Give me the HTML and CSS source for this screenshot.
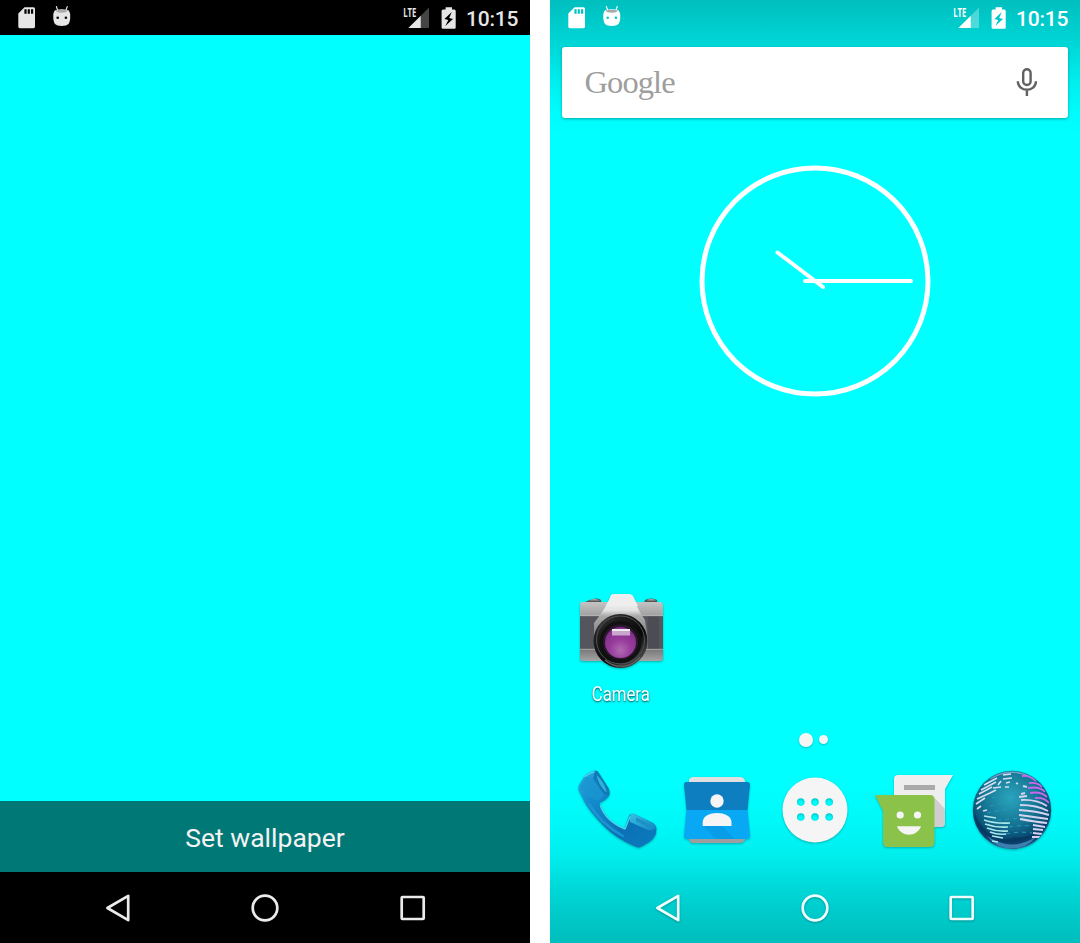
FILE: index.html
```
<!DOCTYPE html>
<html lang="en">
<head>
<meta charset="utf-8">
<title>Wallpaper</title>
<link rel="stylesheet" href="styles.css">
</head>
<body>
<svg class="defs" aria-hidden="true">
  <defs>
    <symbol id="sd" viewBox="0 0 18 22"><path fill-rule="evenodd" d="M6.500 .3H15.500Q17 .3 17 1.800V19.800Q17 21.200 15.500 21.200H1.800Q.3 21.200 .3 19.800V6.500ZM6.400 2.200V6.800H8.600V2.200ZM9.700 2.200V6.800H11.900V2.200ZM13 2.200V6.800H15.200V2.200Z"/></symbol>
    <symbol id="bug" viewBox="0 0 18 21"><path d="M3.400.6L4.600 4M14.200.6L13.100 4" fill="none" stroke="currentColor" stroke-width="1.200" stroke-linecap="round"/><path fill-rule="evenodd" d="M3.200 4Q8.700 2.600 14.500 4Q16.200 4.200 16.500 6L17.200 8V13L16.500 16Q16 19 13 19.600Q8.700 20.300 4.500 19.600Q1.500 19 1 16L.3 13V8L1 6Q1.400 4.200 3.200 4ZM4.700 10.400a1.300 1.300 0 1 0 0 2.600a1.300 1.300 0 1 0 0-2.600ZM12.900 10.400a1.300 1.300 0 1 0 0 2.600a1.300 1.300 0 1 0 0-2.600Z"/><path class="bug-lid" d="M2.600 4.600Q8.700 3 14.900 4.600Q14 6.800 8.700 6.800Q3.500 6.800 2.600 4.600Z"/></symbol>
    <symbol id="signal" viewBox="0 0 28 22"><text x="0.200" y="9.600" font-size="12.500" font-weight="700" textLength="13.200" lengthAdjust="spacingAndGlyphs">LTE</text><path opacity=".3" d="M26 .5V21H17.800V8.700Z"/><path d="M17.800 8.700V21H5.300Z"/></symbol>
    <symbol id="battery" viewBox="0 0 16 23"><path fill-rule="evenodd" d="M4.600 .3H11V2.500H13.300Q14.700 2.500 14.700 4V20.400Q14.700 21.800 13.300 21.800H2Q.6 21.800 .6 20.400V4Q.6 2.500 2 2.500H4.600ZM10.800 5L3.400 12L7.300 13L4.300 19L12 12L8.200 11Z"/></symbol>
    <symbol id="back" viewBox="0 0 32 32"><path d="M25.200 3.800V28.200L4.400 16Z"/></symbol>
    <symbol id="home" viewBox="0 0 32 32"><circle cx="16" cy="16" r="12.300"/></symbol>
    <symbol id="recent" viewBox="0 0 32 32"><rect x="4.700" y="5" width="22" height="22" rx=".8"/></symbol>
  </defs>
</svg>

<main class="screens">
  <section class="phone picker">
    <header class="status">
      <svg class="sd"><use href="#sd"/></svg>
      <svg class="bug"><use href="#bug"/></svg>
      <svg class="signal"><use href="#signal"/></svg>
      <svg class="battery"><use href="#battery"/></svg>
      <span class="time">10:15</span>
    </header>
    <div class="preview"></div>
    <button class="set">Set wallpaper</button>
    <nav class="nav">
      <svg class="back"><use href="#back"/></svg><svg><use href="#home"/></svg><svg><use href="#recent"/></svg>
    </nav>
  </section>

  <section class="phone launcher">
    <header class="status">
      <svg class="sd"><use href="#sd"/></svg>
      <svg class="bug"><use href="#bug"/></svg>
      <svg class="signal"><use href="#signal"/></svg>
      <svg class="battery"><use href="#battery"/></svg>
      <span class="time">10:15</span>
    </header>

    <div class="search">
      <span class="logo">Google</span>
      <svg class="mic" viewBox="0 0 22 30" fill="none" stroke="#616161" stroke-width="2.400"><rect x="7.200" y="2.200" width="7.400" height="15.800" rx="3.700"/><path d="M1.800 14.200C2 25.600 19.800 25.600 20 14.200M10.900 22.500V29"/></svg>
    </div>

    <svg class="clock" viewBox="0 0 232 232" fill="none" stroke="#fff" stroke-linecap="round">
      <circle cx="116" cy="116" r="113" stroke-width="5"/>
      <path stroke-width="4" d="M106 116H212M78.500 87.500L124 122"/>
    </svg>

    <div class="app">
      <svg class="camera" viewBox="0 0 86 78">
        <defs>
          <linearGradient id="cb" x2="0" y2="1"><stop stop-color="#c4c4c4"/><stop offset=".22" stop-color="#a2a2a2"/><stop offset=".8" stop-color="#777"/><stop offset="1" stop-color="#a5a5a5"/></linearGradient>
          <linearGradient id="cp" x2="0" y2="1"><stop stop-color="#fff"/><stop offset=".3" stop-color="#e2e2e2"/><stop offset=".4" stop-color="#aaa"/><stop offset="1" stop-color="#666"/></linearGradient>
          <linearGradient id="cl" x2=".8" y2="1"><stop stop-color="#555"/><stop offset=".25" stop-color="#222"/><stop offset=".65" stop-color="#080808"/><stop offset="1" stop-color="#555"/></linearGradient>
          <radialGradient id="cg" cy=".75" r=".8"><stop stop-color="#b06ab2"/><stop offset=".45" stop-color="#963a9c"/><stop offset="1" stop-color="#7a2b83"/></radialGradient>
        </defs>
        <path fill="#555" d="M11 6Q18 3 22 6V10H6V8ZM66 6Q72 3 78 6V10H65Z"/>
        <path fill="#aaa" d="M12 5.500Q17 4 21 6.500H11ZM69 5.500Q74 4 77 6.500H68Z"/>
        <path fill="url(#cb)" d="M3 8H82Q84 9 84 12V64Q84 67 81 67H4Q1 67 1 64V11Q1 8 3 8Z"/>
        <path fill="#55555d" d="M1 22H84V55H1Z"/><path fill="#4c4c55" d="M69 22H80V55H69Z"/>
        <path stroke="#bebebe" stroke-width=".7" d="M1 21.700H84M1 55.300H84M2 10H82"/>
        <path fill="url(#cp)" d="M32 1Q34 0 37 0H49Q52 0 54 2Q57 13 66 26L69 46V55H15V29Q28 13 32 1Z"/>
        <path fill="#eee" d="M32.500 1Q34 0 37 0H49Q52 0 54 2L59 12H27Z"/>
        <circle cx="41.500" cy="47" r="27" fill="url(#cl)"/>
        <circle cx="41.500" cy="46" r="24" fill="none" stroke="#4d5357" stroke-width="1"/>
        <circle cx="41.500" cy="48" r="21" fill="#111"/>
        <path d="M26 66A24 24 0 0 0 61 63" fill="none" stroke="#666" stroke-width="1.200"/>
        <circle cx="41.500" cy="48" r="17.500" fill="#2c1731"/><circle cx="41.500" cy="48.500" r="15.500" fill="url(#cg)"/>
        <path fill="#c9a7cc" d="M33 35H51V41.500H33Z"/><path fill="#eee" d="M33 35H51V37H33Z"/>
      </svg>
      <span class="label">Camera</span>
    </div>

    <div class="pages"><i class="page current"></i><i class="page"></i></div>

    <div class="dock">
      <svg class="dial" viewBox="0 0 80 80">
        <defs>
          <linearGradient id="ph" x2="1" y2="1"><stop stop-color="#27aee0"/><stop offset=".3" stop-color="#1389cb"/><stop offset=".65" stop-color="#0c70b4"/><stop offset="1" stop-color="#0a7cc0"/></linearGradient>
          <linearGradient id="pe" x2="1" y2="1"><stop stop-color="#39bfe2"/><stop offset="1" stop-color="#1187c4"/></linearGradient>
        </defs>
        <path fill="url(#ph)" d="M1 15L6.500 6Q11 2 16.500 .5Q19 0 20.500 2.500L31 19Q32 23 31 26Q27 31 21.500 33C25 44 34 55 46.500 59L51 46Q53 43 56 44L75 53Q78 55 78.500 58L78 64Q76 69 71.500 72L63 77Q60 78 57 76.500Q51 74 46.500 71.500Q31 63 20 50Q11 40 6.500 32L.5 20Q0 17 1 15Z"/>
        <path fill="#1179b8" d="M17 1Q19 0 20.500 2.500L31 19Q32 23 31 26L26 24L15 9Z"/>
        <path fill="#31b2d9" d="M18.500 5Q26 12 28.500 21Q29 23 27.500 21.500Q20 14 18.500 5Z"/>
        <path fill="#1a95d1" opacity=".8" d="M2 17L8 7L15 8L26 25L20 31Q10 28 2 17Z"/>
        <path fill="none" stroke="#4ad3ec" stroke-width="1.400" stroke-linecap="round" d="M7 6.500Q11 3 16 2M22.500 36Q28 51 46 58.500M47 59L52 46.500"/>
        <path fill="url(#pe)" d="M52 46Q53 43 56 44L75 53Q78 55 78 58Q75 61 70 60L52 52Z"/>
        <path fill="#1d90c6" d="M58 47.500L74 55Q74 58 70 57L58 51Z"/>
        <path fill="none" stroke="#1f9ad4" stroke-width="2.500" stroke-linecap="round" opacity=".8" d="M11 34Q23 54 45 66"/>
      </svg>
      <svg class="people" viewBox="0 0 68 70">
        <path fill="#e0e0e0" d="M6 8V4Q7 1 10 1H57Q61 1 62 5V9Z"/><path fill="#9e9e9e" d="M6 61H62V63Q61 67 57 67H10Q7 67 6 63Z"/>
        <path fill="#0d7fc1" d="M3 6H64Q67 6 67 9L64.500 34H3.500L1 9Q1 6 3 6Z"/><path fill="#08a8f4" d="M3.500 34H64.500L67 60Q67 63 64 63H4Q1 63 1 60Z"/>
        <path fill="#0999df" opacity=".7" d="M4 34L33 63H52L36 47L20 50Z"/><circle cx="34" cy="25" r="6.700" fill="#f5f5f5"/><path fill="#f5f5f5" d="M19.700 50V46C20 34 48 34 48.500 46V50Z"/>
      </svg>
      <svg class="apps" viewBox="0 0 66 66"><path fill="#f5f5f5" fill-rule="evenodd" d="M33 .5a32.500 32.500 0 1 0 0 65a32.500 32.500 0 1 0 0-65ZM18.800 21.300a3.800 3.800 0 1 1 0 7.600a3.800 3.800 0 1 1 0-7.600ZM33 21.300a3.800 3.800 0 1 1 0 7.600a3.800 3.800 0 1 1 0-7.600ZM47.200 21.300a3.800 3.800 0 1 1 0 7.600a3.800 3.800 0 1 1 0-7.600ZM18.800 36.200a3.800 3.800 0 1 1 0 7.600a3.800 3.800 0 1 1 0-7.600ZM33 36.200a3.800 3.800 0 1 1 0 7.600a3.800 3.800 0 1 1 0-7.600ZM47.200 36.200a3.800 3.800 0 1 1 0 7.600a3.800 3.800 0 1 1 0-7.600Z"/></svg>
      <svg class="chat" viewBox="0 0 80 76">
        <path fill="#eee" d="M24 2H79L71 16V50Q71 54 67 54H20V6Q20 2 24 2Z"/><path fill="#bdbdbd" d="M58 22L71 36V50Q71 54 67 54H58Z" opacity=".65"/><path fill="#aaa" d="M30 12H61V17H30Z"/>
        <path fill="#8bc34a" d="M1 22H56Q60.500 22 60.500 27V69Q60.500 74 56 74H13Q9 74 9 69V38Z"/><circle cx="26.200" cy="42" r="3.600" fill="#f5f5f5"/><circle cx="43.500" cy="42" r="3.600" fill="#f5f5f5"/><path fill="#f5f5f5" d="M23 53.300H47C43 64.500 27 64.500 23 53.300Z"/>
      </svg>
      <svg class="globe" viewBox="0 0 80 82">
        <defs><radialGradient id="gl" cx=".48" cy=".34" r=".65"><stop stop-color="#2aa5bd"/><stop offset=".55" stop-color="#147492"/><stop offset=".85" stop-color="#08456e"/><stop offset="1" stop-color="#2d72a5"/></radialGradient><clipPath id="gc"><circle cx="40" cy="41" r="38.500"/></clipPath></defs>
        <circle cx="40" cy="41" r="39.200" fill="url(#gl)"/>
        <g clip-path="url(#gc)" fill="none">
          <path fill="#062f57" opacity=".55" d="M2 43Q18 78 43 68Q64 70 76 51Q66 83 40 80Q4 76 2 43Z"/>
          <path fill="#4b91c3" opacity=".75" d="M15 67Q40 84 65 67Q54 80 40 80Q25 80 15 67Z"/>
          <path stroke="#9bafe0" stroke-width="3" opacity=".7" d="M18 9Q40-4 62 9"/>
          <path stroke="#2997c2" stroke-width="1" stroke-dasharray="4 4" d="M20 29Q42 24 57 21M18 37Q42 31 54 28M15 44Q42 39 52 36M25 51Q46 49 57 49M37 58Q48 56 60 57M34 65Q48 62 60 64"/>
          <path stroke="#d2dded" stroke-width="1.700" d="M12 16L25 9M9 21L24 13M7 25L20 18M5 30L18 24M4 35L13 29M5 40L9 37M21 19L29 18M18 24L24 21M31 6L39 5M31 10L40 9M34 14L38 13M33 18L37 18M11 42L15 41M29 12L26 16"/>
          <path stroke="#a8e7ec" stroke-width="1.700" d="M12 47L24 49M12 51Q24 55 38 54M13 55Q24 59 36 58M15 59Q25 63 36 62M18 63Q26 66 34 65M20 67L31 69M20 72L26 73"/>
          <path stroke="#c967ef" stroke-width="1.800" d="M50 7Q58 6 64 12M57 14Q66 13 70 18M56 19Q68 17 73 23M58 24Q69 22 75 28M63 29Q72 28 77 34"/>
          <path stroke="#d5d4ef" stroke-width="1.900" d="M49 31Q64 30 75 37M48 36Q65 36 76 42M47 41Q65 42 77 46M47 46Q62 48 76 50M48 50Q64 53 75 54M61 56L73 58M61 60L71 61M61 64L70 65M60 68L68 68M44 14L46 15M51 17L55 18M49 25L53 24M47 28L55 27"/>
        </g>
      </svg>
    </div>

    <nav class="nav">
      <svg class="back"><use href="#back"/></svg><svg><use href="#home"/></svg><svg><use href="#recent"/></svg>
    </nav>
  </section>
</main>
</body>
</html>
```

FILE: styles.css
```
* { box-sizing: border-box; }
body { margin: 0; background: #fff; font-family: Roboto, "Liberation Sans", sans-serif; }
svg { display: block; flex: none; }
.defs { position: absolute; width: 0; height: 0; }
.screens { display: grid; grid-template-columns: 530px 530.5px; column-gap: 19.5px; height: 943px; overflow: hidden; }
.phone { display: flex; flex-direction: column; height: 943px; min-width: 0; }

.status { display: flex; align-items: flex-start; height: 35.4px; padding: 7px 11px 0 18px; flex: none; color: #e6e6e6; fill: currentColor; }
.sd { width: 18px; height: 22px; }
.bug { width: 18px; height: 21px; margin: -1px 0 0 17px; }
.bug-lid { fill: #aaa; }
.signal { width: 28px; height: 22px; margin-left: auto; font-family: "Open Sans", Roboto, sans-serif; }
.battery { width: 16px; height: 23px; margin-left: 10px; }
.time { margin-left: 9px; width: 53px; font-size: 21px; font-weight: 500; line-height: 24px; letter-spacing: -.2px; white-space: nowrap; }

.picker { background: #000; }
.preview { flex: 1; background: #0ff; }
.set { height: 71px; flex: none; border: 0; padding: 2px 0 0; background: #007876; color: #f3f3f3; font: 26.5px/32px Roboto, sans-serif; }
.nav { display: flex; justify-content: center; align-items: center; gap: 115.5px; height: 71px; flex: none; fill: none; stroke: #ebebeb; stroke-width: 2.7; stroke-linejoin: round; }
.nav svg { width: 32px; height: 32px; }
.nav .back { margin: 0 -1.5px 0 1.5px; }

.launcher { background: linear-gradient(#00bebe, #00cccc 25px, #00dada 50px, #00eded 80px, #00fbfb 110px, #0ff 135px, #0ff 785px, #00f8f8 825px, #00eeee 855px, #00dada 885px, #00cccc 910px, #00bfbf 938px); }
.launcher .status { color: #fff; }
.launcher .bug-lid { fill: #b9f1f1; }
.search { display: flex; justify-content: space-between; align-items: center; height: 71px; flex: none; margin: 11.6px 12px 0; padding: 0 30px 0 23px; border-radius: 3px; background: #fff; box-shadow: 0 1px 3px rgba(0, 70, 70, .45); }
.logo { color: #9e9e9e; font: 32.5px/40px "Liberation Serif", serif; letter-spacing: -.9px; padding-bottom: 1px; }
.mic { width: 22px; height: 30px; }
.clock { width: 232px; height: 232px; margin: 47.5px auto 0; }
.app { display: flex; flex-direction: column; width: 86px; height: 120px; margin: 196.5px 0 0 29px; }
.camera { width: 86px; height: 78px; filter: drop-shadow(0 1px 1px rgba(0, 0, 0, .3)); }
.label { align-self: center; margin: 10px 2px 0 0; font-size: 19.5px; line-height: 26px; color: #fff; text-shadow: 0 1px 2px rgba(0, 0, 0, .7); transform: scaleX(.86); }
.pages { display: flex; align-items: center; justify-content: center; gap: 6px; height: 14px; margin: 19px 3px 0 0; flex: none; }
.page { width: 9px; height: 9px; border-radius: 50%; background: #f5f5f5; box-shadow: 0 1px 2px rgba(0, 60, 60, .3); }
.current { width: 13.5px; height: 13.5px; }
.dock { display: flex; align-items: center; height: 82px; flex: none; margin: 22.5px 0 0 28.5px; filter: drop-shadow(0 1px 1px rgba(0, 60, 70, .35)); }
.dial { width: 80px; height: 80px; }
.people { width: 68px; height: 70px; margin: 2px 0 0 24.5px; }
.apps { width: 66px; height: 66px; margin-left: 31px; }
.chat { width: 80px; height: 76px; margin: 1px 0 0 26.5px; }
.globe { width: 80px; height: 82px; margin-left: 18px; }
.launcher .nav { margin-top: auto; stroke: #effefe; filter: drop-shadow(0 1px 1px rgba(0, 70, 70, .4)); }
```
